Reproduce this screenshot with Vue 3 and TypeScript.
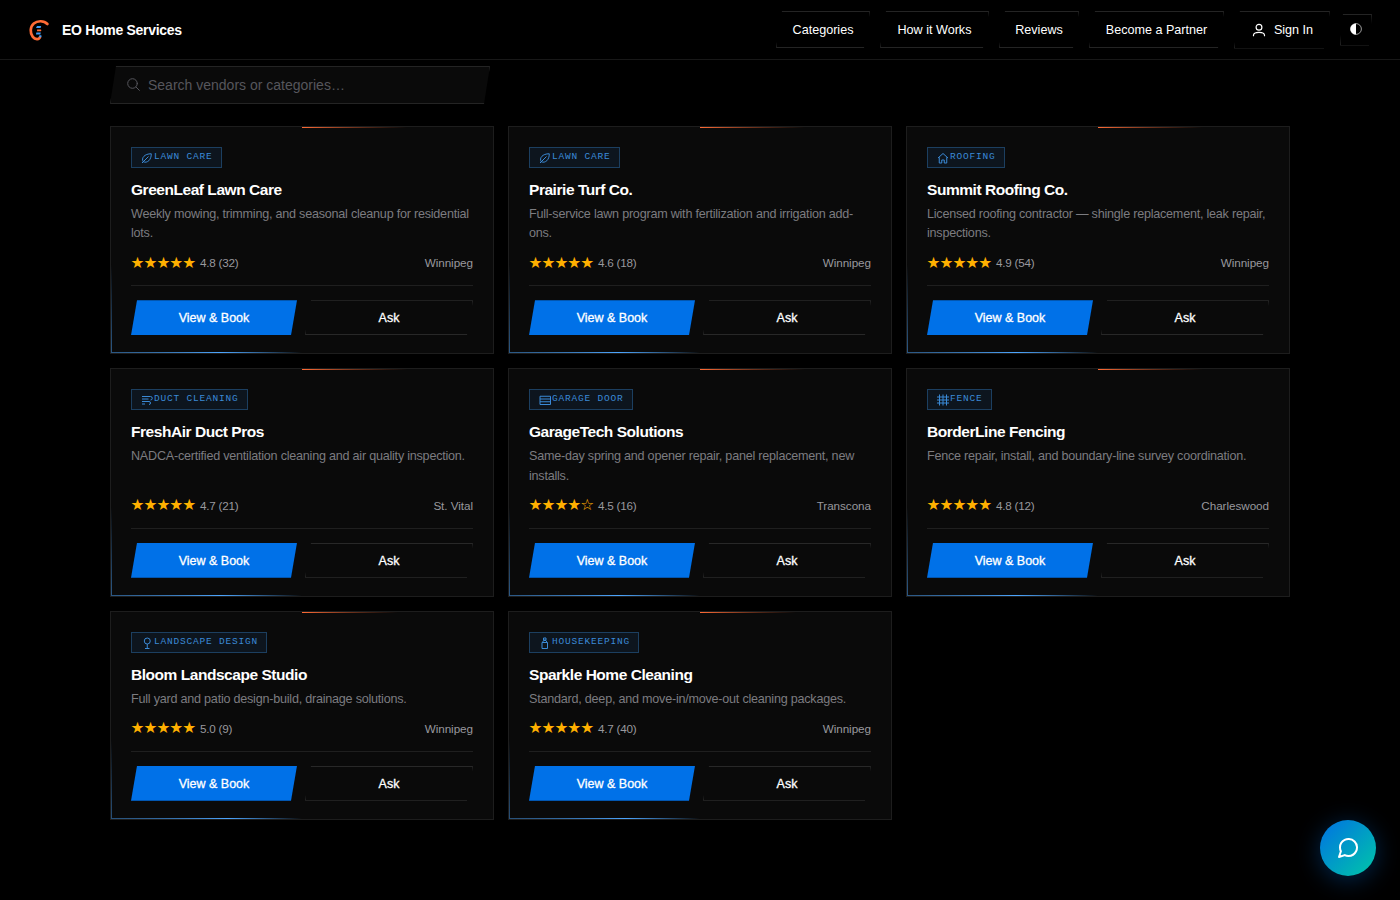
<script setup lang="ts">
type IconName = 'leaf' | 'home' | 'wind' | 'garage' | 'fence' | 'tree' | 'bottle'

interface Vendor {
  category: string
  icon: IconName
  name: string
  description: string
  rating: string
  reviews: number
  filled: number
  area: string
}

const navItems = [
  { label: 'Categories', cls: 'nav-categories' },
  { label: 'How it Works', cls: 'nav-how' },
  { label: 'Reviews', cls: 'nav-reviews' },
  { label: 'Become a Partner', cls: 'nav-partner' },
]

const icons: Record<IconName, string[]> = {
  leaf: ['M4.500 19.500C0 12 7 3.500 20.500 3.500C21 15.500 12.500 23 4.500 19.500z', 'M2 22 15 9'],
  home: ['M2 12 12 3l10 9', 'M4.500 10.500V22h5v-6h5v6h5V10.500'],
  wind: ['M2 5h17a3.500 3.500 0 0 1 0 7', 'M2 10h13', 'M2 15h14a3 3 0 0 1 0 6', 'M2 20h6'],
  garage: ['M2 4.500h21v16.500H2z', 'M2 10h21M2 15.500h21'],
  fence: ['M5 1v22M12 1v22M19 1v22', 'M0 6h24M0 12h24M0 18h24'],
  tree: ['M12.500 2a6 6 0 1 0 0 12a6 6 0 1 0 0-12', 'M12.500 14v9M8 23h9'],
  bottle: ['M9 2h5v4H9z', 'M7 11l2-4h5l2 4', 'M6 11h11v12H6z'],
}

const vendors: Vendor[] = [
  { category: 'LAWN CARE', icon: 'leaf', name: 'GreenLeaf Lawn Care', description: 'Weekly mowing, trimming, and seasonal cleanup for residential lots.', rating: '4.8', reviews: 32, filled: 5, area: 'Winnipeg' },
  { category: 'LAWN CARE', icon: 'leaf', name: 'Prairie Turf Co.', description: 'Full-service lawn program with fertilization and irrigation add-ons.', rating: '4.6', reviews: 18, filled: 5, area: 'Winnipeg' },
  { category: 'ROOFING', icon: 'home', name: 'Summit Roofing Co.', description: 'Licensed roofing contractor — shingle replacement, leak repair, inspections.', rating: '4.9', reviews: 54, filled: 5, area: 'Winnipeg' },
  { category: 'DUCT CLEANING', icon: 'wind', name: 'FreshAir Duct Pros', description: 'NADCA-certified ventilation cleaning and air quality inspection.', rating: '4.7', reviews: 21, filled: 5, area: 'St. Vital' },
  { category: 'GARAGE DOOR', icon: 'garage', name: 'GarageTech Solutions', description: 'Same-day spring and opener repair, panel replacement, new installs.', rating: '4.5', reviews: 16, filled: 4, area: 'Transcona' },
  { category: 'FENCE', icon: 'fence', name: 'BorderLine Fencing', description: 'Fence repair, install, and boundary-line survey coordination.', rating: '4.8', reviews: 12, filled: 5, area: 'Charleswood' },
  { category: 'LANDSCAPE DESIGN', icon: 'tree', name: 'Bloom Landscape Studio', description: 'Full yard and patio design-build, drainage solutions.', rating: '5.0', reviews: 9, filled: 5, area: 'Winnipeg' },
  { category: 'HOUSEKEEPING', icon: 'bottle', name: 'Sparkle Home Cleaning', description: 'Standard, deep, and move-in/move-out cleaning packages.', rating: '4.7', reviews: 40, filled: 5, area: 'Winnipeg' },
]

const stars = (filled: number): string => '★'.repeat(filled) + '☆'.repeat(5 - filled)
</script>

<template>
  <div class="page">
    <header class="topbar">
      <a class="brand">
        <svg class="logo" viewBox="0 0 22 22" fill="none">
          <path d="M19.400 5C16 1.500 9.500 1.400 5.800 4.500C2 7.700 1.800 14.200 4.800 17.800C7 20.600 11.300 20.900 12 18" stroke="#ff6b35" stroke-width="2.700" stroke-linecap="round" />
          <path d="M9 7h4.200l-.6 1.900H8zM8.300 13.400h4.500l-.5 2H8zM11.400 16.300h2v1.900h-2.200z" fill="#3d9bf5" />
          <path d="M9.200 10.600h3.700l.5.700-.5 1H9z" fill="#ff6b35" />
        </svg>
        <span class="brand-name">EO Home Services</span>
      </a>
      <nav class="nav">
        <button v-for="item in navItems" :key="item.label" class="nav-btn" :class="item.cls">{{ item.label }}</button>
        <button class="nav-btn nav-signin">
          <svg class="user" viewBox="0 0 14 14" fill="none" stroke="currentColor" stroke-width="1.200" stroke-linecap="round">
            <circle cx="7" cy="4.200" r="2.900" />
            <path d="M1.500 12.700v-.4c0-2 1.700-3 5.500-3s5.500 1 5.500 3v.4" />
          </svg>
          Sign In
        </button>
        <button class="nav-btn nav-theme" aria-label="Toggle theme">
          <svg class="contrast" viewBox="0 0 12 12">
            <circle cx="6" cy="6" r="5.400" fill="none" stroke="#fff" stroke-width=".6" />
            <path d="M6 .4a5.600 5.600 0 0 0 0 11.200z" fill="#fff" />
          </svg>
        </button>
      </nav>
    </header>

    <main class="content">
      <div class="search">
        <svg class="search-icon" viewBox="0 0 13 13" fill="none" stroke="currentColor" stroke-width="1" stroke-linecap="round">
          <circle cx="5.500" cy="5.500" r="4.800" />
          <path d="m9.100 9.100 3.300 3.300" />
        </svg>
        <span class="placeholder">Search vendors or categories…</span>
      </div>

      <section class="grid">
        <article v-for="vendor in vendors" :key="vendor.name" class="card">
          <div class="tag">
            <svg class="tag-icon" viewBox="0 0 24 24" fill="none" stroke="currentColor" stroke-width="2" stroke-linejoin="round">
              <path v-for="(d, i) in icons[vendor.icon]" :key="i" :d="d" />
            </svg>
            <span class="tag-text">{{ vendor.category }}</span>
          </div>
          <h3 class="name">{{ vendor.name }}</h3>
          <p class="desc">{{ vendor.description }}</p>
          <div class="meta">
            <span class="stars">{{ stars(vendor.filled) }}</span>
            <span class="score">{{ vendor.rating }} ({{ vendor.reviews }})</span>
            <span class="area">{{ vendor.area }}</span>
          </div>
          <div class="actions">
            <button class="btn primary">View &amp; Book</button>
            <button class="btn ghost">Ask</button>
          </div>
        </article>
      </section>
    </main>

    <button class="chat" aria-label="Open chat">
      <svg class="chat-icon" viewBox="0 0 24 24" fill="none" stroke="#fff" stroke-width="2" stroke-linecap="round" stroke-linejoin="round">
        <path d="M21 11.500a8.380 8.380 0 0 1-.9 3.800 8.500 8.500 0 0 1-7.600 4.700 8.380 8.380 0 0 1-3.800-.9L3 21l1.900-5.700a8.380 8.380 0 0 1-.9-3.800 8.500 8.500 0 0 1 4.700-7.600 8.380 8.380 0 0 1 3.800-.9h.5a8.480 8.480 0 0 1 8 8v.5z" />
      </svg>
    </button>
  </div>
</template>

<style>
body {
  background: #000;
}
</style>

<style scoped>
.page {
  box-sizing: border-box;
  height: 900px;
  overflow: hidden;
  background: #000;
  color: #fff;
  font-family: 'Liberation Sans', Arial, sans-serif;
  -webkit-font-smoothing: antialiased;
}
.page *,
.page *::before {
  box-sizing: border-box;
}
button {
  margin: 0;
  padding: 0;
  border: 0;
  background: none;
  color: inherit;
  font-family: inherit;
}
.topbar {
  display: flex;
  align-items: center;
  justify-content: space-between;
  height: 60px;
  padding: 0 28px;
  border-bottom: 1px solid #181818;
}
.brand {
  display: flex;
  align-items: center;
  gap: 12px;
}
.logo {
  width: 22px;
  height: 22px;
}
.brand-name {
  font-size: 14px;
  font-weight: 700;
  letter-spacing: -0.3px;
  white-space: nowrap;
}
.nav {
  display: flex;
  align-items: center;
  gap: 10px;
}
.nav-btn {
  display: flex;
  align-items: center;
  justify-content: center;
  height: 37px;
  border: 1px solid #242424;
  font-size: 12.6px;
  white-space: nowrap;
  clip-path: polygon(6px 0, 100% 0, calc(100% - 6px) 100%, 0 100%);
}
.nav-categories { width: 94px; }
.nav-how { width: 109px; }
.nav-reviews { width: 80px; }
.nav-partner { width: 135px; }
.nav-signin {
  width: 96px;
  height: 38px;
  padding-left: 1px;
  gap: 8px;
}
.nav-theme {
  width: 32px;
  height: 32px;
  clip-path: polygon(3px 0, 100% 0, calc(100% - 3px) 100%, 0 100%);
}
.user {
  width: 14px;
  height: 14px;
}
.contrast {
  width: 12px;
  height: 12px;
  margin-top: -1px;
}
.content {
  width: 1180px;
  margin: 0 auto;
  padding-top: 6px;
}
.search {
  display: flex;
  align-items: center;
  gap: 8.5px;
  width: 380px;
  height: 38px;
  padding-left: 15.5px;
  border: 1px solid #242424;
  background: #0a0a0a;
  color: #56565c;
  clip-path: polygon(6px 0, 100% 0, calc(100% - 6px) 100%, 0 100%);
}
.search-icon {
  width: 13px;
  height: 13px;
  margin-top: -1px;
}
.placeholder {
  font-size: 14px;
}
.grid {
  display: grid;
  grid-template-columns: repeat(3, 1fr);
  gap: 14px;
  margin-top: 21.8px;
}
.card {
  position: relative;
  display: flex;
  flex-direction: column;
  align-items: stretch;
  padding: 20px 20px 18px;
  border: 1px solid #1d1d1d;
  background: #0a0a0a;
}
.card::before {
  content: '';
  position: absolute;
  inset: 0;
  padding: 1px;
  background: conic-gradient(from 0deg, #ff6b35 0%, transparent 12%, transparent 50%, #4da6ff 60%, transparent 73%, transparent 100%);
  -webkit-mask: linear-gradient(#000 0 0) content-box, linear-gradient(#000 0 0);
  -webkit-mask-composite: xor;
  mask: linear-gradient(#000 0 0) content-box exclude, linear-gradient(#000 0 0);
  pointer-events: none;
}
.tag {
  display: flex;
  align-self: flex-start;
  align-items: center;
  height: 21px;
  padding: 0 8px 0 9px;
  border: 1px solid #1c3f60;
  background: #0d151e;
  color: #3b8ad6;
}
.tag-icon {
  width: 12px;
  height: 12px;
  margin: 1px 1px 0 0;
}
.tag-text {
  margin-top: -1.2px;
  font-family: 'Liberation Mono', monospace;
  font-size: 9.5px;
  letter-spacing: 0.8px;
  line-height: 12px;
}
.name {
  height: 20px;
  margin: 12px 0 0;
  font-size: 15.5px;
  font-weight: 700;
  line-height: 20px;
  letter-spacing: -0.46px;
}
.desc {
  flex: 1;
  margin: 5.05px 0 0;
  color: #7c7c80;
  font-size: 12.6px;
  line-height: 19.5px;
  letter-spacing: -0.23px;
}
.meta {
  display: flex;
  align-items: center;
  height: 17px;
  margin-top: 10.5px;
  color: #98989d;
  font-size: 11.7px;
}
.stars {
  width: 65.5px;
  margin-left: -0.5px;
  padding-top: 1px;
  color: #ffb000;
  font-family: 'DejaVu Sans', sans-serif;
  font-size: 15.5px;
  line-height: 17px;
  letter-spacing: -0.95px;
  white-space: nowrap;
}
.score {
  margin-left: 4px;
  letter-spacing: -0.25px;
}
.area {
  margin-left: auto;
  letter-spacing: -0.05px;
}
.actions {
  display: flex;
  gap: 8px;
  margin-top: 13.95px;
  padding-top: 14px;
  border-top: 1px solid #1f1f1f;
}
.btn {
  flex: 1;
  height: 35px;
  padding-top: 0.6px;
  font-size: 12.5px;
  -webkit-text-stroke: 0.3px currentColor;
  clip-path: polygon(6px 0, 100% 0, calc(100% - 6px) 100%, 0 100%);
}
.primary {
  background: #0071e8;
}
.ghost {
  border: 1px solid #282828;
}
.chat {
  position: fixed;
  right: 24px;
  bottom: 24px;
  display: flex;
  align-items: center;
  justify-content: center;
  width: 56px;
  height: 56px;
  border-radius: 50%;
  background: linear-gradient(135deg, #0071e3, #00c7a8);
  box-shadow: 0 4px 24px rgba(0, 113, 227, 0.35);
}
.chat-icon {
  width: 24px;
  height: 24px;
}
</style>
